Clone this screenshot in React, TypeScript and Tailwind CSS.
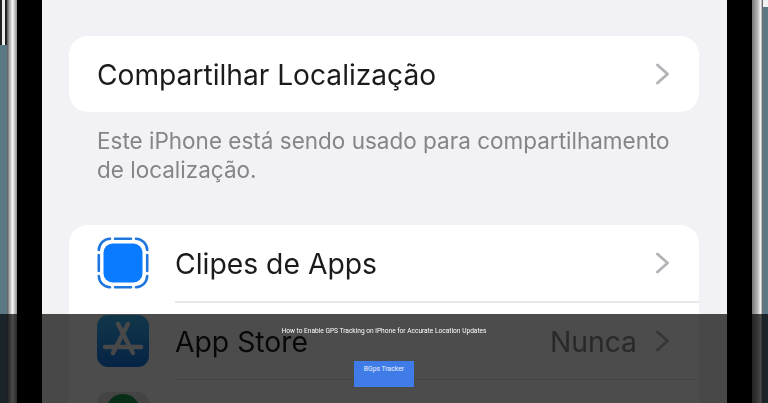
const RowChevron = () => (
  <svg width="16" height="24" viewBox="0 0 16 24" fill="none" className="shrink-0">
    <path d="M2.5 3 L12.5 12 L2.5 21" stroke="#b4b4b8" strokeWidth="3" strokeLinecap="round" strokeLinejoin="round" />
  </svg>
);

const ClipsIcon = () => (
  <svg width="52" height="52" viewBox="0 0 52 52" fill="none" stroke="#1f76dc" strokeWidth="2.6" strokeLinecap="round" className="shrink-0">
    <path d="M18 1.8 H34 M18 50.2 H34 M1.8 18 V34 M50.2 18 V34" />
    <path d="M13 1.8 A11.5 11.5 0 0 0 1.8 13 M39 1.8 A11.5 11.5 0 0 1 50.2 13 M1.8 39 A11.5 11.5 0 0 0 13 50.2 M50.2 39 A11.5 11.5 0 0 1 39 50.2" />
    <rect x="6.5" y="6.5" width="39" height="39" rx="9" fill="#0a7aff" stroke="none" />
  </svg>
);

const AppStoreIcon = () => (
  <div className="w-[52px] h-[52px] rounded-[11px] bg-[linear-gradient(#3cb8f6,#1476e6)] shrink-0">
    <svg width="52" height="52" viewBox="0 0 52 52" fill="none" stroke="#f2f2f2" strokeWidth="4.4" strokeLinecap="round">
      <path d="M31 9 L16 38 M21 9 L36 38 M8 32 H44" />
    </svg>
  </div>
);

const LeftRail = () => (
  <div className="flex h-full w-[42px] shrink-0">
    <div className="flex flex-col h-full w-[7px]">
      <div className="h-[45px] bg-[#ececec] border-x-2 border-[#222]" />
      <div className="flex-1 bg-[#5b7985]" />
    </div>
    <div className="w-[10px] bg-[linear-gradient(90deg,#555,#aaa_25%,#f6f6f6_55%,#8f8f8f)]" />
    <div className="flex-1 bg-black" />
  </div>
);

const RightRail = () => (
  <div className="flex h-full w-[41px] shrink-0">
    <div className="w-[25px] bg-black" />
    <div className="w-[11px] bg-[linear-gradient(90deg,#777,#b5b5b5_50%,#f6f6f6_80%,#444)]" />
    <div className="flex flex-col flex-1 h-full">
      <div className="h-[7px] bg-[#f0f0f0]" />
      <div className="flex-1 bg-[#5b7985]" />
    </div>
  </div>
);

export default function App() {
  return (
    <div className="relative w-[768px] h-[403px] overflow-hidden flex font-['Inter','Liberation_Sans',sans-serif]">
      <LeftRail />
      <main className="w-[685px] h-full shrink-0 bg-[#f1f1f6] pl-[27px] pr-[28px] pt-[36px] blur-[0.4px]">
        <section className="h-[76px] bg-white rounded-[19px] px-[28px] flex items-center justify-between">
          <span className="text-[28.15px] leading-none text-[#1b1b1d] pt-[2px]">Compartilhar Localização</span>
          <RowChevron />
        </section>
        <p className="mt-[14px] ml-[28px] text-[22.5px] leading-[29px] text-[#858589] w-[590px]">
          Este iPhone está sendo usado para compartilhamento de localização.
        </p>
        <section className="mt-[41px] bg-white rounded-[19px] px-[28px] h-[200px]">
          <div className="flex h-[76px] items-center">
            <ClipsIcon />
            <span className="ml-[26px] flex-1 text-[28.3px] leading-none pt-[3px] text-[#1b1b1d]">Clipes de Apps</span>
            <RowChevron />
          </div>
          <div className="ml-[78px] -mr-[28px] h-[2px] bg-[#e8e8ec]" />
          <div className="flex h-[76px] items-center">
            <AppStoreIcon />
            <span className="ml-[26px] flex-1 text-[28.3px] leading-none pt-[2px] text-[#1b1b1d]">App Store</span>
            <span className="mr-[18px] text-[28.3px] leading-none pt-[2px] text-[#8a8a8e]">Nunca</span>
            <RowChevron />
          </div>
          <div className="ml-[78px] -mr-[28px] h-[1px] bg-[#e8e8ec]" />
          <div className="mt-[12px] w-[52px] h-[52px] rounded-[11px] bg-[#e4e4e6] flex justify-center pt-[2px]">
            <div className="w-[34px] h-[34px] rounded-full bg-[#1e9b52]" />
          </div>
        </section>
      </main>
      <RightRail />
      <div className="absolute left-0 right-0 top-[314px] bottom-0 bg-black/70 flex flex-col items-center font-['Roboto','Liberation_Sans',sans-serif]">
        <p className="mt-[11px] text-[6.6px] leading-[10px] pt-[1px] text-white blur-[0.3px]">How to Enable GPS Tracking on iPhone for Accurate Location Updates</p>
        <div className="mt-[25px] w-[60px] h-[26px] bg-[#3f7ce8] text-center text-[6.8px] leading-[10px] pt-[3px] text-white/90">BGps Tracker</div>
      </div>
    </div>
  );
}
